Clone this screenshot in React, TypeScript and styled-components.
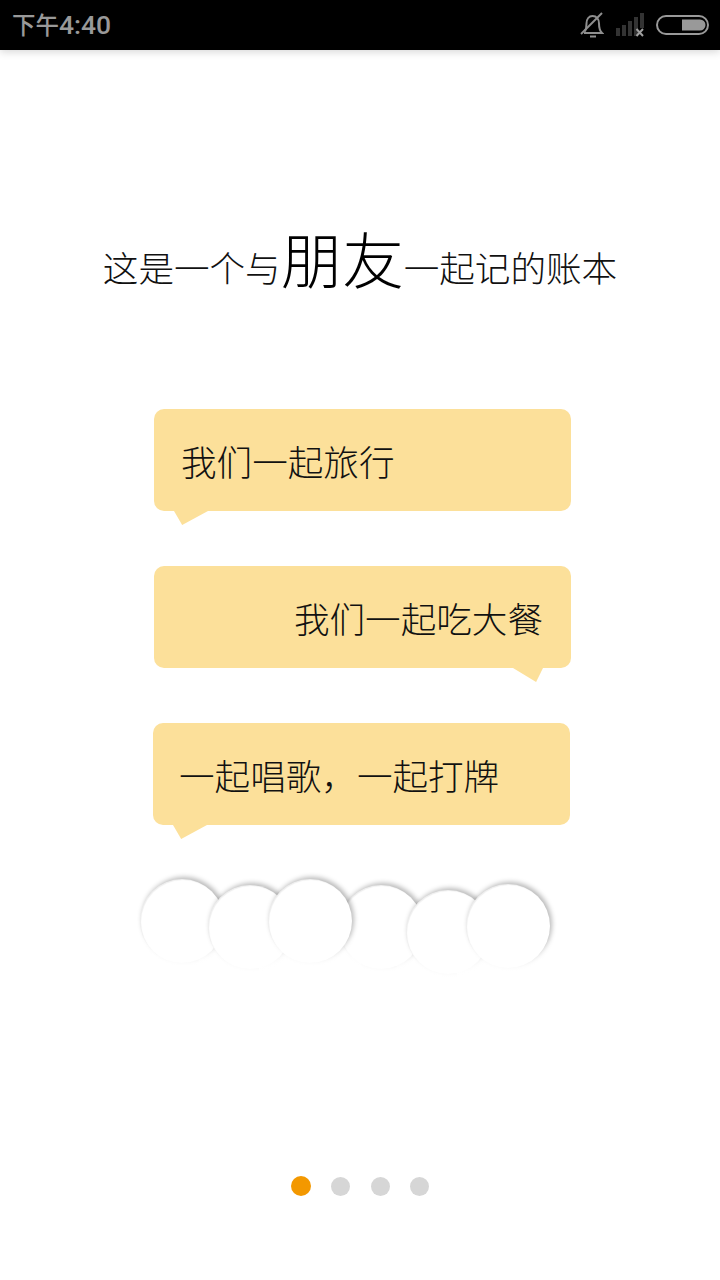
import React from 'react';
import styled, {createGlobalStyle} from 'styled-components';

const GlobalStyle = createGlobalStyle`
  html, body {
    margin: 0;
    padding: 0;
    background: #fff;
  }
  body {
    font-family: "Noto Sans CJK SC", "Liberation Sans", sans-serif;
  }
`

const Screen = styled.div`
  width: 720px;
  height: 1280px;
  display: flex;
  flex-direction: column;
  overflow: hidden;
  background: #fff;
`

const StatusBar = styled.div`
  height: 50px;
  flex: none;
  background: #000;
  display: flex;
  align-items: center;
  justify-content: space-between;
  padding: 0 11px 0 12px;
  box-shadow: 0 2px 8px rgba(0, 0, 0, .16);
  position: relative;
`

const Time = styled.span`
  font-family: Roboto, "Noto Sans CJK SC", sans-serif;
  font-size: 26.500px;
  line-height: 50px;
  font-weight: 500;
  color: #999;
`

const TimeCjk = styled.span`
  font-size: 23.500px;
  font-weight: 500;
`

const StatusIcons = styled.div`
  display: flex;
  align-items: center;
  gap: 12px;
`

const Title = styled.h1`
  margin: 164px 0 0;
  height: 88px;
  text-align: center;
  font-size: 35.600px;
  line-height: 88px;
  font-weight: 300;
  color: #111;
  white-space: nowrap;
`

const Big = styled.span`
  font-size: 61.500px;
  font-weight: 300;
  color: #000;
  vertical-align: -2px;
`

const Bubbles = styled.div`
  margin-top: 107px;
  display: flex;
  flex-direction: column;
  gap: 55px;
  padding-left: 154px;
`

const Bubble = styled.div<{$right?: boolean; $nudge?: number}>`
  position: relative;
  width: 417px;
  height: 102px;
  box-sizing: border-box;
  margin-left: ${p => p.$nudge || 0}px;
  padding: 0 28px 0 ${p => p.$nudge ? 26 : 27}px;
  display: flex;
  align-items: center;
  justify-content: ${p => p.$right ? 'flex-end' : 'flex-start'};
  background: #fce09a;
  border-radius: 10px;
  font-size: 35.600px;
  font-weight: 300;
  color: #111;

  &::after {
    content: "";
    position: absolute;
    top: 100%;
    ${p => p.$right ? 'right: 28px;' : 'left: 20px;'}
    width: ${p => p.$right ? 30 : 34}px;
    height: 14px;
    background: #fce09a;
    clip-path: ${p => p.$right
        ? 'polygon(0 0, 100% 0, 77% 100%)'
        : 'polygon(0 0, 100% 0, 24% 100%)'};
  }
`

const Avatars = styled.div`
  margin-top: 54px;
  padding-left: 140px;
  display: flex;
  align-items: flex-start;
`

const Avatar = styled.div<{$top: number; $overlap: number; $z: number}>`
  flex: none;
  position: relative;
  z-index: ${p => p.$z};
  width: 84px;
  height: 84px;
  margin-top: ${p => p.$top}px;
  margin-left: ${p => -p.$overlap}px;
  border-radius: 50%;
  background: #fff;
  box-shadow: 2px -2px 5px rgba(0, 0, 0, .28), inset 1px 1px 1px rgba(0, 0, 0, .07);

  &::after {
    content: "";
    position: absolute;
    left: -9px;
    right: -9px;
    top: 66%;
    bottom: -9px;
    background: linear-gradient(to bottom, rgba(255, 255, 255, 0), #fff 100%);
  }
`

const Pager = styled.div`
  margin-top: auto;
  margin-bottom: 84px;
  display: flex;
  align-items: center;
  justify-content: center;
  gap: 20.300px;
`

const Dot = styled.span<{$active?: boolean}>`
  width: ${p => p.$active ? 20 : 19}px;
  height: ${p => p.$active ? 20 : 19}px;
  border-radius: 50%;
  background: ${p => p.$active ? '#f39800' : '#d6d6d6'};
`

const BellOffIcon = () => (
    <svg width="24" height="26" viewBox="0 0 24 26" fill="none" stroke="#8f8f8f" strokeWidth="2">
        <path d="M5 19.500c1-2 1.500-3 1.500-8 0-4.500 2.500-7.500 6-7.500 4 0 6.500 3 6.500 7.500 0 5 .5 7 3 9.500H4"/>
        <path d="M10 24.500h6"/>
        <path d="M1 22 22 1"/>
    </svg>
)

const SignalIcon = () => (
    <svg width="28" height="24" viewBox="0 0 28 24">
        <rect x="0" y="15" width="4" height="8" fill="#333"/>
        <rect x="6" y="12" width="4" height="11" fill="#333"/>
        <rect x="12" y="8" width="4" height="15" fill="#333"/>
        <rect x="18" y="4" width="4" height="19" fill="#333"/>
        <rect x="24" y="0" width="4" height="15" fill="#333"/>
        <path d="M20.500 16l6.500 7m0-7l-6.500 7" stroke="#a0a0a0" strokeWidth="2"/>
    </svg>
)

const BatteryIcon = () => (
    <svg width="53" height="20" viewBox="0 0 53 20">
        <rect x="1" y="1" width="51" height="18" rx="9" fill="none" stroke="#999" strokeWidth="2"/>
        <path d="M26 4.500h18a5.500 5.500 0 0 1 0 11H26z" fill="#999"/>
    </svg>
)

const avatars = [
    {top: 0, overlap: 0, z: 1},
    {top: 6, overlap: 16, z: 2},
    {top: 0, overlap: 24, z: 3},
    {top: 6, overlap: 13, z: 1},
    {top: 11, overlap: 17, z: 2},
    {top: 5, overlap: 24, z: 3},
]

function App() {
    return (
        <Screen>
            <GlobalStyle/>
            <StatusBar>
                <Time><TimeCjk>下午</TimeCjk>4:40</Time>
                <StatusIcons>
                    <BellOffIcon/>
                    <SignalIcon/>
                    <BatteryIcon/>
                </StatusIcons>
            </StatusBar>
            <Title>这是一个与<Big>朋友</Big>一起记的账本</Title>
            <Bubbles>
                <Bubble>我们一起旅行</Bubble>
                <Bubble $right>我们一起吃大餐</Bubble>
                <Bubble $nudge={-1}>一起唱歌，一起打牌</Bubble>
            </Bubbles>
            <Avatars>
                {avatars.map((a, i) => <Avatar key={i} $top={a.top} $overlap={a.overlap} $z={a.z}/>)}
            </Avatars>
            <Pager>
                <Dot $active/>
                <Dot/>
                <Dot/>
                <Dot/>
            </Pager>
        </Screen>
    );
}

export default App;
